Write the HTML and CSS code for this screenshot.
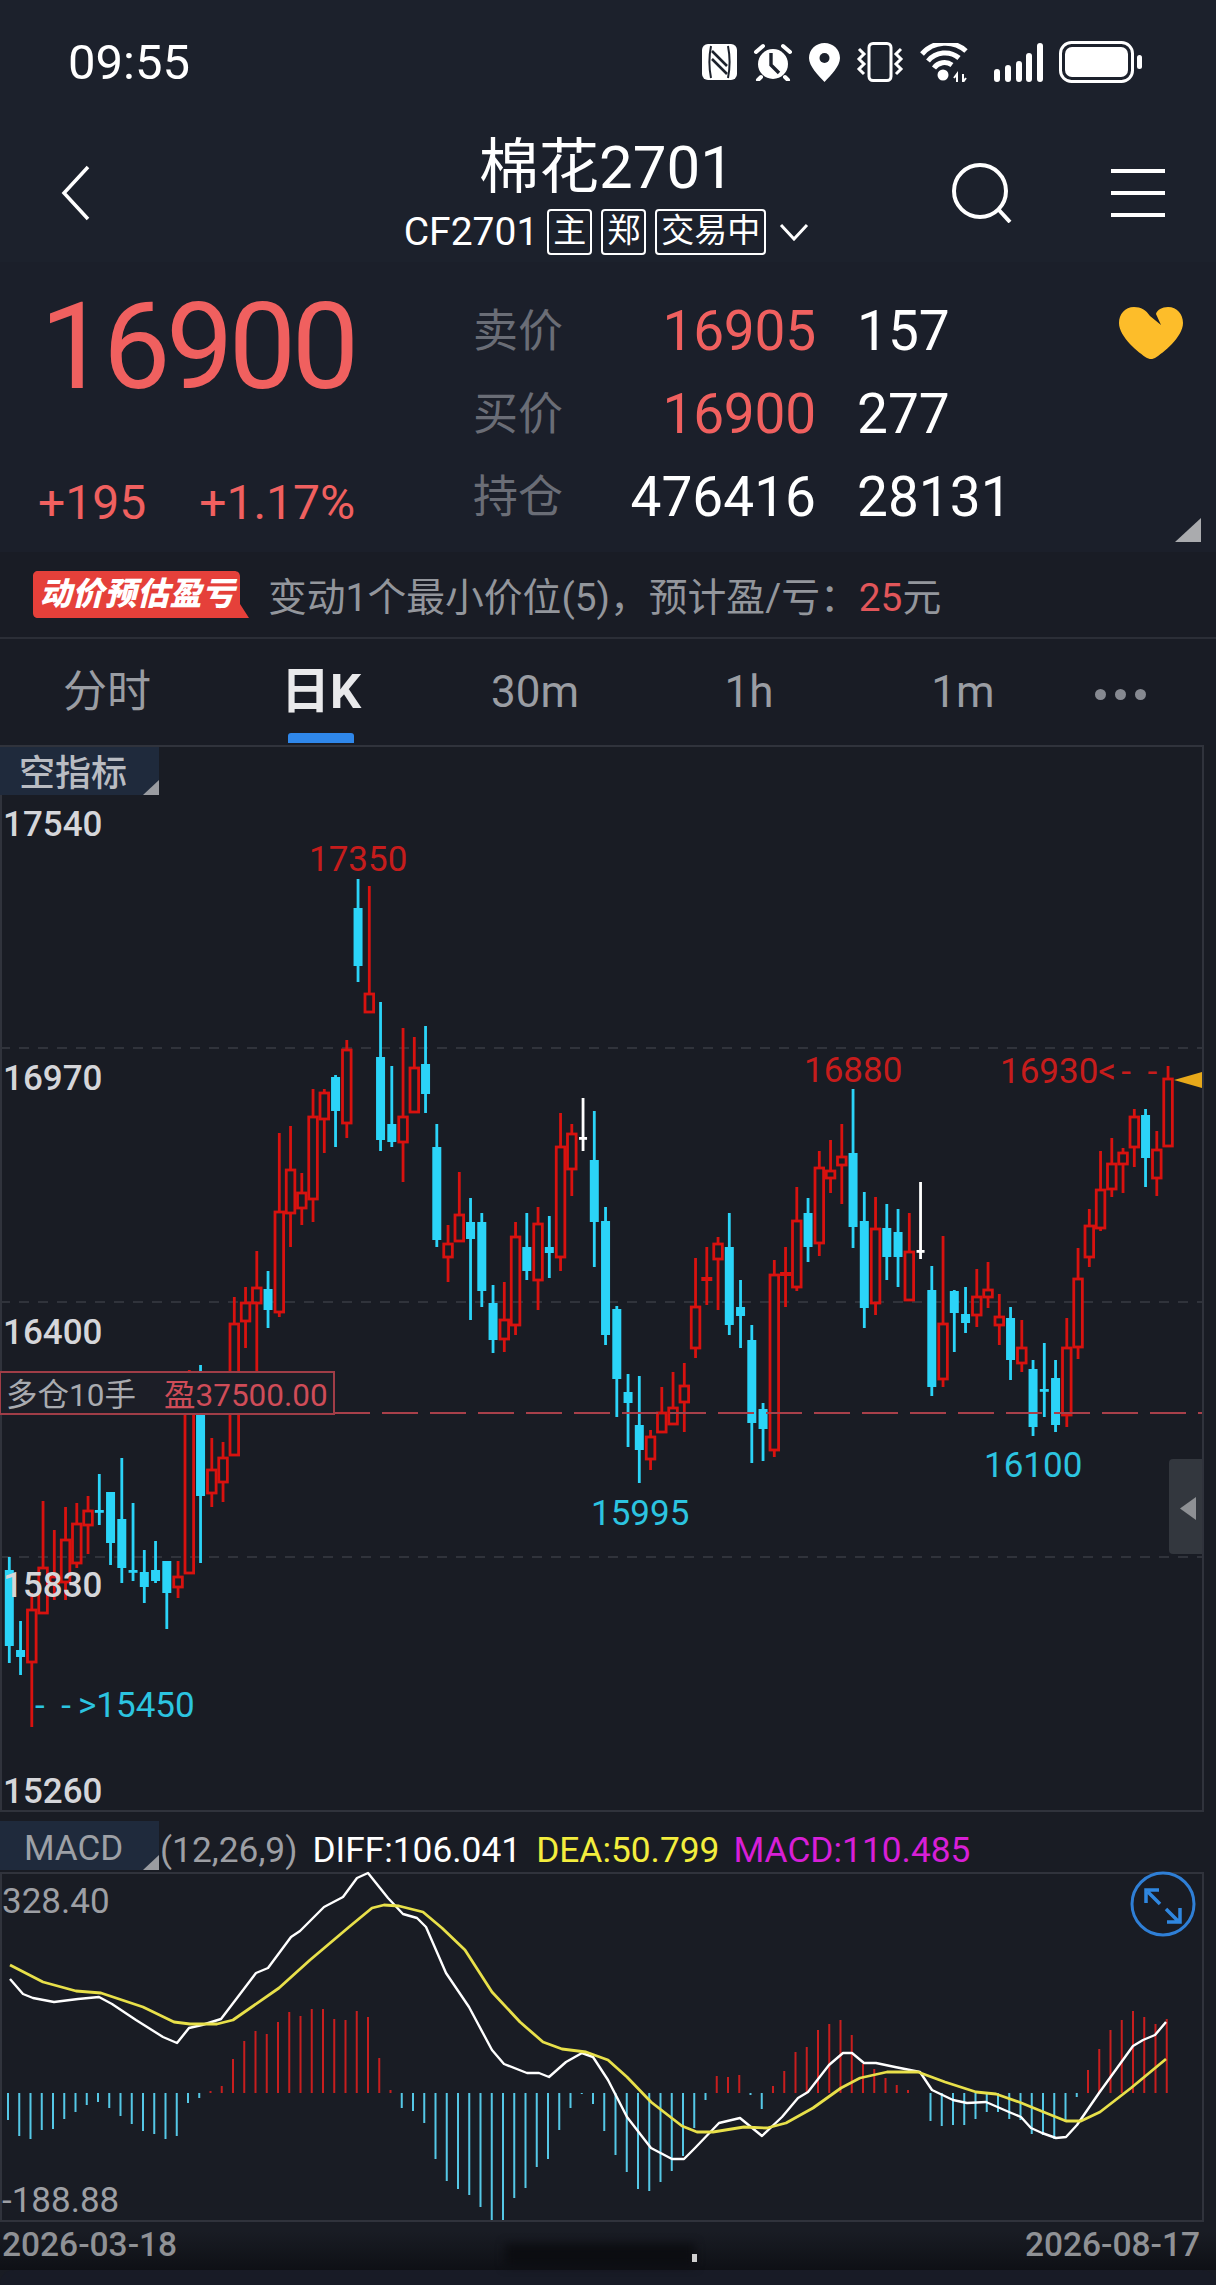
FILE: index.html
```html
<!DOCTYPE html>
<html lang="zh-CN">
<head>
    <meta charset="UTF-8">
    <meta name="viewport" content="width=device-width, initial-scale=1.0">
    <title>棉花2701</title>
    <link rel="stylesheet" href="styles.css">
</head>
<body>
    <div class="status-bar">
        <span class="clock">09:55</span>
        <div class="status-icons">
            <svg class="ico-nfc" width="35" height="36" viewBox="0 0 35 36">
                <rect width="35" height="36" rx="6" fill="#fff"/>
                <path d="M9 2C7 12 7 24 9 34M26 2C28 12 28 24 26 34" fill="none" stroke="#1c212c" stroke-width="2"/>
                <path d="M10 7L25 22M10 15L25 30" fill="none" stroke="#1c212c" stroke-width="2.6"/>
            </svg>
            <svg class="ico-alarm" width="40" height="38" viewBox="0 0 40 38">
                <circle cx="20" cy="21" r="15" fill="#fff"/>
                <path d="M18 10V22L26 30" fill="none" stroke="#1c212c" stroke-width="3.4"/>
                <path d="M3 9L10 3M37 9L30 3M8 34L5 37M32 34L35 37" fill="none" stroke="#fff" stroke-width="4" stroke-linecap="round"/>
            </svg>
            <svg class="ico-pin" width="31" height="39" viewBox="0 0 31 39">
                <path d="M15.5 0C7 0 0 6.6 0 15C0 23 9 32 15.5 39C22 32 31 23 31 15C31 6.6 24 0 15.5 0Z" fill="#fff"/>
                <circle cx="15.5" cy="15" r="5" fill="#1c212c"/>
            </svg>
            <svg class="ico-vibrate" width="48" height="40" viewBox="0 0 48 40">
                <rect x="13" y="1.5" width="22" height="37" rx="4" fill="none" stroke="#fff" stroke-width="3"/>
                <path d="M3 7L8 12L3 17L8 22L3 27L8 32M45 7L40 12L45 17L40 22L45 27L40 32" fill="none" stroke="#fff" stroke-width="3"/>
            </svg>
            <svg class="ico-wifi" width="50" height="39" viewBox="0 0 50 39">
                <circle cx="23" cy="32" r="5.5" fill="#fff"/>
                <path d="M14 25A13 13 0 0 1 32 22M8 18A22 22 0 0 1 39 15M2 11A31 31 0 0 1 46 8" fill="none" stroke="#fff" stroke-width="5"/>
                <path d="M37 39V31L34 35M43 31V39L46 35" fill="none" stroke="#fff" stroke-width="2"/>
            </svg>
            <svg class="ico-signal" width="49" height="39" viewBox="0 0 49 39">
                <rect x="0" y="26" width="6" height="13" rx="3" fill="#fff"/>
                <rect x="11" y="22" width="6" height="17" rx="3" fill="#fff"/>
                <rect x="22" y="18" width="6" height="21" rx="3" fill="#fff"/>
                <rect x="32" y="10" width="6" height="29" rx="3" fill="#fff"/>
                <rect x="43" y="0" width="6" height="39" rx="3" fill="#fff"/>
            </svg>
            <svg class="ico-battery" width="84" height="42" viewBox="0 0 84 42">
                <rect x="1.5" y="1.5" width="72" height="39" rx="11" fill="none" stroke="#fff" stroke-width="3"/>
                <rect x="6" y="6" width="63" height="30" rx="7" fill="#fff"/>
                <rect x="78" y="14" width="5" height="14" rx="2.5" fill="#fff"/>
            </svg>
        </div>
    </div>

    <div class="nav-bar">
        <svg class="back" width="30" height="56" viewBox="0 0 30 56">
            <path d="M27 2L3 28L27 54" fill="none" stroke="#fff" stroke-width="3.5"/>
        </svg>
        <div class="nav-title">
            <h1>棉花2701</h1>
            <div class="sub-title">
                <span>CF2701</span>
                <span class="tag">主</span>
                <span class="tag">郑</span>
                <span class="tag">交易中</span>
                <svg width="30" height="18" viewBox="0 0 30 18">
                    <path d="M2 2L15 16L28 2" fill="none" stroke="#fff" stroke-width="3"/>
                </svg>
            </div>
        </div>
        <div class="nav-actions">
            <svg width="60" height="60" viewBox="0 0 60 60">
                <circle cx="28" cy="28" r="26" fill="none" stroke="#fff" stroke-width="4"/>
                <path d="M46 46L58 59" fill="none" stroke="#fff" stroke-width="4"/>
            </svg>
            <div class="menu"><i></i><i></i><i></i></div>
        </div>
    </div>

    <div class="quote">
        <div class="quote-main">
            <div class="last-price">16900</div>
            <div class="change"><span>+195</span><span>+1.17%</span></div>
        </div>
        <div class="quote-table">
            <span class="q-label">卖价</span><span class="q-val up">16905</span><span class="q-vol">157</span>
            <span class="q-label">买价</span><span class="q-val up">16900</span><span class="q-vol">277</span>
            <span class="q-label">持仓</span><span class="q-val">476416</span><span class="q-vol">28131</span>
        </div>
        <svg class="heart" width="64" height="52" viewBox="0 0 64 52">
            <path d="M31 9C27 3 22 0 15 0C6 0 0 7 0 16C0 30 20 46 28 51C31 52.5 33 52.5 36 51C44 46 64 30 64 16C64 7 58 0 49 0C43 0 38 3 37 7L42 18Z" fill="#fdbd2a"/>
        </svg>
        <div class="corner-mark"></div>
    </div>

    <div class="tip-row">
        <div class="badge">
            <svg width="216" height="47" viewBox="0 0 216 47">
                <path d="M5 0H201C205 0 207 2 207 6V33L216 47H5C2 47 0 45 0 42V5C0 2 2 0 5 0Z" fill="#e5403a"/>
            </svg>
            <span>动价预估盈亏</span>
        </div>
        <div class="tip-text">变动1个最小价位(5)，预计盈/亏：<em>25</em>元</div>
    </div>

    <div class="tabs">
        <span class="tab">分时</span>
        <span class="tab active">日K</span>
        <span class="tab">30m</span>
        <span class="tab">1h</span>
        <span class="tab">1m</span>
        <span class="tab more"><i></i><i></i><i></i></span>
    </div>

    <div class="panel price-panel">
        <svg class="chart" width="1200" height="1063" viewBox="2 747 1200 1063">
            <path class="grid" d="M0 1048H1202M0 1302H1202M0 1557H1202"/>
            <g id="candles"></g>
            <path class="hold-line" d="M334 1413H1202"/>
            <rect class="hold-box" x="0" y="1372" width="334" height="42"/>
            <text class="hold-txt" x="6" y="1406">多仓10手</text>
            <text class="hold-pnl" x="164" y="1406">盈37500.00</text>
            <text class="axis" x="3" y="836">17540</text>
            <text class="axis" x="3" y="1090">16970</text>
            <text class="axis" x="3" y="1344">16400</text>
            <text class="axis" x="3" y="1597">15830</text>
            <text class="axis" x="3" y="1803">15260</text>
            <text class="mark-hi" x="309" y="871">17350</text>
            <text class="mark-hi" x="804" y="1082">16880</text>
            <text class="mark-hi spaced" x="1000" y="1083">16930&lt;<tspan dx="5">- -</tspan></text>
            <text class="mark-lo" x="591" y="1525">15995</text>
            <text class="mark-lo" x="984" y="1477">16100</text>
            <text class="mark-lo spaced" x="35" y="1717">- -<tspan dx="7">&gt;15450</tspan></text>
            <path class="last-arrow" d="M1174 1080L1202 1072V1088Z"/>
        </svg>
        <div class="ind-tab">空指标<b></b></div>
        <div class="side-tab"><b></b></div>
    </div>

    <div class="macd-head">
        <div class="ind-tab macd-tab">MACD<b></b></div>
        <span class="m-param">(12,26,9)</span>
        <span class="m-diff">DIFF:106.041</span>
        <span class="m-dea">DEA:50.799</span>
        <span class="m-macd">MACD:110.485</span>
    </div>

    <div class="panel macd-panel">
        <svg class="chart" width="1200" height="346" viewBox="2 1874 1200 346">
            <g id="macd-bars"></g>
            <polyline id="diff" class="line-diff"/>
            <polyline id="dea" class="line-dea"/>
            <text class="m-axis" x="2" y="1913">328.40</text>
            <text class="m-axis" x="2" y="2212">-188.88</text>
            <circle class="zoom-btn" cx="1163" cy="1904" r="31"/>
            <path class="zoom-arrow" d="M1148 1892L1160 1904M1146 1903V1890H1159M1166 1909L1178 1921M1180 1908V1922H1167"/>
        </svg>
    </div>

    <div class="date-row">
        <span>2026-03-18</span>
        <i class="smudge"></i>
        <i class="speck"></i>
        <span>2026-08-17</span>
    </div>
    <div class="gesture-bar"></div>

    <script src="chart.js"></script>
</body>
</html>
```

FILE: styles.css
```css
* {
    box-sizing: border-box;
}
body {
    margin: 0;
    width: 1216px;
    height: 2285px;
    overflow: hidden;
    background-color: #191c24;
    color: #fff;
    font-family: Roboto, "Noto Sans CJK SC", sans-serif;
}
.status-bar {
    display: flex;
    justify-content: space-between;
    align-items: center;
    height: 124px;
    padding: 0 73px 0 68px;
    background: #1c212c;
}
.clock {
    font-size: 49px;
}
.status-icons {
    display: flex;
    align-items: center;
    gap: 16px;
}
.status-icons svg {
    display: block;
}
.status-icons .ico-wifi {
    margin-right: 8px;
}
.nav-bar {
    display: grid;
    grid-template-columns: 1fr auto 1fr;
    align-items: center;
    height: 138px;
    padding: 0 51px 0 61px;
    background: #1c212c;
}
.nav-title {
    align-self: start;
    margin: 11px 13px 0 0;
    text-align: center;
}
.nav-title h1 {
    margin: 0;
    font-size: 60px;
    font-weight: 400;
    line-height: 66px;
}
.sub-title {
    display: flex;
    align-items: center;
    gap: 9px;
    margin-top: 8px;
    height: 46px;
    font-size: 39px;
    line-height: 46px;
}
.tag {
    height: 46px;
    padding: 0 4px;
    border: 2px solid #fff;
    border-radius: 4px;
    font-size: 33px;
    line-height: 40px;
}
.sub-title svg {
    margin-left: 4px;
}
.nav-actions {
    display: flex;
    justify-content: flex-end;
    align-items: center;
    gap: 99px;
}
.menu {
    display: flex;
    flex-direction: column;
    gap: 18px;
    width: 54px;
}
.menu i {
    display: block;
    height: 4px;
    background: #fff;
}
.quote {
    position: relative;
    display: flex;
    align-items: flex-start;
    height: 290px;
    padding-top: 27px;
    background: #1b1f2a;
}
.quote-main {
    width: 475px;
    padding-left: 40px;
    color: #f0605f;
}
.last-price {
    margin-top: 3px;
    font-size: 120px;
    line-height: 110px;
    letter-spacing: -4.5px;
}
.change {
    display: flex;
    gap: 53px;
    margin: 71px 0 0 -2px;
    font-size: 48px;
    line-height: 60px;
}
.quote-table {
    display: grid;
    margin-left: -2px;
    grid-template-columns: 92px 251px 200px;
    grid-auto-rows: 83px;
    align-items: center;
}
.q-label {
    padding-bottom: 6px;
    font-size: 45px;
    color: #6a6d76;
}
.q-val {
    justify-self: end;
    font-size: 55px;
}
.q-val.up {
    color: #f0605f;
    letter-spacing: -0.2px;
}
.q-vol {
    padding-left: 41px;
    font-size: 55px;
}
.heart {
    margin: 18px 33px 0 auto;
}
.corner-mark {
    position: absolute;
    right: 15px;
    bottom: 10px;
    width: 26px;
    height: 24px;
    background: #aaabae;
    clip-path: polygon(100% 0, 100% 100%, 0 100%);
}
.tip-row {
    display: flex;
    align-items: center;
    height: 87px;
    padding-left: 33px;
    border-bottom: 2px solid #2b2e37;
    background: #191c25;
}
.badge {
    position: relative;
    width: 216px;
    height: 47px;
    color: #fff;
    text-align: center;
    font-size: 32px;
    font-weight: 900;
    font-style: italic;
    letter-spacing: 0.5px;
    line-height: 47px;
}
.badge svg {
    position: absolute;
    left: 0;
    top: 0;
}
.badge span {
    position: relative;
    margin-right: 8px;
}
.tip-text {
    margin: 0 0 2px 19px;
    font-size: 38.8px;
    color: #93969c;
}
.tip-text em {
    font-style: normal;
    color: #e2565a;
}
.tabs {
    display: grid;
    grid-template-columns: repeat(5, 214px) 1fr;
    align-items: center;
    height: 106px;
    background: #191c25;
    font-size: 44px;
    line-height: 52px;
    color: #9a9da3;
}
.tab {
    position: relative;
    text-align: center;
}
.tab.active {
    font-size: 49px;
    font-weight: 700;
    color: #e9e9eb;
}
.tab.active::after {
    content: "";
    position: absolute;
    left: 74px;
    top: 67px;
    width: 66px;
    height: 10px;
    border-radius: 3px 3px 0 0;
    background: #2f87ea;
}
.tab.more {
    display: flex;
    justify-content: center;
    gap: 9px;
    margin-top: 4px;
    padding-right: 46px;
}
.tab.more i {
    width: 11px;
    height: 11px;
    border-radius: 50%;
    background: #868991;
}
.panel {
    position: relative;
    width: 1204px;
    border: 2px solid #30333c;
}
.chart {
    display: block;
    overflow: visible;
}
.grid {
    fill: none;
    stroke: #30333b;
    stroke-width: 2;
    stroke-dasharray: 10 9;
}
.hold-line {
    fill: none;
    stroke: #a8404a;
    stroke-width: 2;
    stroke-dasharray: 36 12;
}
.hold-box {
    fill: #1c1e27;
    stroke: #a03d47;
    stroke-width: 2;
}
.hold-txt, .hold-pnl {
    font-size: 31.5px;
}
.hold-txt {
    fill: #a9abb0;
}
.hold-pnl {
    fill: #cf4c58;
}
.axis {
    font-size: 35px;
    font-weight: 500;
    fill: #d5d6da;
}
.mark-hi, .mark-lo {
    font-size: 35px;
}
.mark-hi {
    fill: #c61c1c;
}
.mark-lo {
    fill: #2cc4e0;
}
.spaced {
    word-spacing: 8px;
}
.last-arrow {
    fill: #e8a91a;
}
.ind-tab {
    position: absolute;
    left: -2px;
    top: 0;
    width: 159px;
    height: 48px;
    padding-left: 19px;
    background: #1f2a3c;
    font-size: 36px;
    font-weight: 500;
    line-height: 54px;
    color: #b9bcc2;
}
.ind-tab b {
    position: absolute;
    right: 0;
    bottom: 0;
    width: 16px;
    height: 15px;
    background: #9a9ca1;
    clip-path: polygon(100% 0, 100% 100%, 0 100%);
}
.side-tab {
    position: absolute;
    right: 0;
    top: 712px;
    width: 33px;
    height: 95px;
    border-radius: 4px 0 0 4px;
    background: #33373e;
}
.side-tab b {
    position: absolute;
    left: 11px;
    top: 38px;
    width: 16px;
    height: 23px;
    background: #8e9094;
    clip-path: polygon(100% 0, 100% 100%, 0 50%);
}
.macd-head {
    position: relative;
    display: flex;
    align-items: center;
    height: 60px;
    padding: 16px 0 0 160px;
    font-size: 35.3px;
    white-space: nowrap;
}
.macd-tab {
    left: 0;
    top: 9px;
    height: 49px;
    padding-left: 24px;
    font-size: 35px;
    font-weight: 400;
    line-height: 56px;
    color: #9da0a6;
}
.m-param {
    color: #9d9fa4;
}
.m-diff {
    margin-left: 15px;
}
.m-dea {
    margin-left: 15px;
    color: #f3ed3d;
}
.m-macd {
    margin-left: 14px;
    color: #d71fd7;
}
.macd-panel {
    height: 350px;
}
.line-diff, .line-dea {
    fill: none;
    stroke-linejoin: round;
}
.line-diff {
    stroke: #fff;
    stroke-width: 2.4;
}
.line-dea {
    stroke: #e8e04a;
    stroke-width: 2.8;
}
.m-axis {
    font-size: 35px;
    fill: #9d9fa4;
}
.zoom-btn {
    fill: none;
    stroke: #2f7fd6;
    stroke-width: 3;
}
.zoom-arrow {
    fill: none;
    stroke: #2f87e0;
    stroke-width: 3.5;
}
.date-row {
    position: relative;
    display: flex;
    justify-content: space-between;
    height: 48px;
    padding: 1px 16px 0 2px;
    background: linear-gradient(#191c24 20%, #0e1015 100%);
    font-size: 33.5px;
    font-weight: 500;
    line-height: 44px;
    color: #8f9195;
}
.smudge {
    position: absolute;
    left: 505px;
    top: 22px;
    width: 190px;
    height: 22px;
    background: #0c0d11;
    filter: blur(5px);
}
.speck {
    position: absolute;
    left: 692px;
    top: 32px;
    width: 5px;
    height: 8px;
    background: #d0d0d0;
}
.gesture-bar {
    height: 15px;
    border-radius: 14px 14px 0 0;
    background: #181b26;
}
```

FILE: chart.js
```js
// candles: kind, high, body top, body bottom, low (page pixels)
const candles = [
    ['b',1557,1570,1646,1663],['b',1621,1650,1657,1675],['r',1593,1610,1662,1727],['r',1501,1568,1613,1613],
    ['r',1530,1577,1583,1600],['r',1507,1540,1582,1600],['r',1503,1524,1563,1568],['r',1496,1511,1525,1554],
    ['b',1474,1510,1512,1525],['b',1492,1492,1543,1565],['b',1458,1519,1568,1583],['b',1503,1570,1572,1581],
    ['b',1550,1572,1587,1603],['b',1541,1570,1581,1583],['b',1561,1561,1593,1629],['r',1561,1577,1587,1598],
    ['r',1370,1385,1573,1573],['b',1365,1385,1496,1563],['r',1438,1470,1493,1507],['r',1442,1458,1482,1502],
    ['r',1297,1324,1455,1455],['r',1287,1303,1321,1348],['r',1251,1288,1303,1372],['b',1271,1289,1310,1328],
    ['r',1133,1212,1312,1317],['r',1126,1170,1213,1247],['r',1173,1193,1208,1225],['r',1089,1117,1199,1222],
    ['r',1089,1093,1119,1153],['b',1075,1077,1111,1147],['r',1040,1050,1123,1138],['b',879,908,966,982],
    ['r',886,994,1012,1012],['b',1002,1057,1140,1151],['b',1066,1124,1142,1147],['r',1028,1117,1142,1182],
    ['r',1037,1068,1112,1112],['b',1026,1064,1094,1113],['b',1124,1147,1240,1247],['r',1225,1244,1257,1282],
    ['r',1172,1215,1241,1241],['b',1198,1222,1239,1320],['b',1213,1222,1291,1307],['b',1285,1303,1340,1353],
    ['r',1282,1320,1339,1352],['r',1222,1237,1325,1335],['b',1213,1247,1271,1280],['r',1207,1224,1280,1310],
    ['b',1216,1247,1253,1278],['r',1113,1147,1257,1271],['r',1124,1134,1169,1196],['w',1098,1137,1139,1151],
    ['b',1111,1160,1222,1267],['b',1207,1221,1335,1345],['b',1306,1309,1379,1417],['b',1374,1392,1403,1447],
    ['b',1376,1425,1450,1483],['r',1430,1437,1459,1470],['r',1387,1413,1432,1433],['r',1372,1408,1424,1424],
    ['r',1363,1386,1402,1432],['r',1258,1307,1348,1358],['r',1247,1278,1280,1305],['r',1237,1244,1259,1310],
    ['b',1213,1247,1325,1335],['b',1280,1307,1316,1348],['b',1325,1340,1423,1463],['b',1403,1409,1429,1461],
    ['r',1260,1275,1450,1457],['r',1247,1273,1275,1307],['r',1187,1221,1287,1291],['b',1198,1213,1247,1262],
    ['r',1151,1168,1243,1256],['r',1140,1171,1178,1193],['r',1124,1157,1165,1204],['b',1089,1153,1227,1248],
    ['b',1192,1221,1308,1328],['r',1197,1229,1303,1315],['b',1204,1228,1257,1280],['b',1209,1232,1257,1287],
    ['r',1213,1252,1300,1300],['w',1182,1250,1252,1259],['b',1266,1290,1387,1396],['r',1236,1324,1379,1387],
    ['b',1290,1291,1313,1352],['b',1287,1314,1323,1333],['r',1269,1297,1315,1327],['r',1262,1290,1297,1308],
    ['r',1294,1317,1325,1345],['b',1307,1318,1360,1380],['r',1320,1348,1363,1372],['b',1360,1369,1427,1436],
    ['b',1343,1389,1391,1417],['b',1360,1378,1425,1432],['r',1318,1348,1415,1427],['r',1248,1279,1347,1359],
    ['r',1209,1226,1257,1267],['r',1151,1190,1228,1231],['r',1138,1164,1189,1197],['r',1148,1153,1164,1193],
    ['r',1109,1117,1147,1167],['b',1109,1115,1158,1187],['r',1131,1150,1178,1196],['r',1066,1079,1146,1146]
];

const histogram = [
    -27,-43,-46,-37,-36,-26,-19,-12,-9,-15,-23,-31,-38,-41,-46,-43,-10,-5,2,7,34,52,62,59,71,81,
    77,84,84,74,73,82,76,35,3,-15,-18,-30,-66,-88,-96,-102,-114,-127,-127,-105,-95,-74,-66,-37,-15,-1,
    -11,-38,-62,-79,-96,-98,-89,-78,-63,-35,-7,17,16,18,-2,-16,7,22,41,46,63,69,73,58,
    29,24,15,8,3,0,-28,-33,-32,-32,-26,-19,-19,-26,-27,-41,-42,-46,-29,-4,23,44,63,73,82,76,69,74
];

// line points, real x and y offset from 1800
const diffLine = [
    [10,179],[23,194],[33,198],[54,202],[78,199],[99,197],[112,204],[136,220],[163,237],[177,243],[189,228],[202,225],
    [221,219],[237,198],[256,173],[268,168],[291,137],[300,131],[324,107],[343,97],[357,78],[368,73],[388,98],[403,114],
    [417,118],[426,127],[446,173],[469,207],[492,250],[504,264],[527,273],[539,273],[549,277],[566,262],[582,253],[593,257],
    [608,280],[627,317],[651,348],[672,359],[684,359],[695,348],[719,323],[740,318],[762,336],[782,317],[798,298],[808,292],
    [829,265],[843,253],[852,253],[864,263],[876,263],[895,267],[920,272],[932,290],[953,300],[967,303],[986,302],[1009,312],
    [1021,317],[1031,328],[1042,333],[1056,338],[1066,337],[1077,325],[1099,293],[1112,275],[1133,246],[1143,240],[1155,235],[1166,222]
];
const deaLine = [
    [10,165],[43,182],[76,191],[101,193],[143,207],[174,222],[190,224],[217,224],[233,220],[279,188],[310,160],[349,127],
    [372,108],[384,105],[399,106],[423,112],[442,128],[465,150],[492,192],[520,222],[543,242],[562,249],[586,252],[608,260],
    [627,277],[651,302],[682,326],[697,332],[713,332],[744,327],[767,328],[786,323],[813,308],[841,288],[860,278],[887,272],
    [918,272],[945,282],[976,292],[996,294],[1019,302],[1046,313],[1066,321],[1081,321],[1100,312],[1131,288],[1166,259]
];

const STEP = 11.25;

function bar(x, y, w, h, color) {
    return `<rect x="${x}" y="${y}" width="${w}" height="${h}" fill="${color}"/>`;
}

function candleSvg(c, i) {
    const [kind, high, top, bottom, low] = c;
    const x = 9.3 + i * STEP;
    const color = kind === 'r' ? '#d8120f' : kind === 'b' ? '#2bd4f8' : '#ffffff';
    const h = bottom - top;
    if (kind !== 'r') {
        const wide = kind === 'w' ? 8 : 9;
        return bar(x - 1.4, high, 2.8, low - high, color) + bar(x - wide / 2, top, wide, Math.max(h, 2.8), color);
    }
    const wicks = bar(x - 1.4, high, 2.8, top - high, color) + bar(x - 1.4, bottom, 2.8, low - bottom, color);
    if (h <= 4) {
        return wicks + bar(x - 5.5, top - 1, 11, h + 2, color);
    }
    return wicks + `<rect x="${x - 4.3}" y="${top}" width="8.6" height="${h}" fill="none" stroke="${color}" stroke-width="2.8"/>`;
}

document.getElementById('candles').innerHTML = candles.map(candleSvg).join('');

document.getElementById('macd-bars').innerHTML = histogram.map((v, i) => {
    const x = 7 + i * STEP;
    const color = v > 0 ? '#c81e1e' : '#55c8e6';
    return bar(x, v > 0 ? 2093 - v : 2093, 2, Math.abs(v), color);
}).join('');

function toPoints(line) {
    return line.map(p => `${p[0]},${1800 + p[1]}`).join(' ');
}

document.getElementById('diff').setAttribute('points', toPoints(diffLine));
document.getElementById('dea').setAttribute('points', toPoints(deaLine));
```
